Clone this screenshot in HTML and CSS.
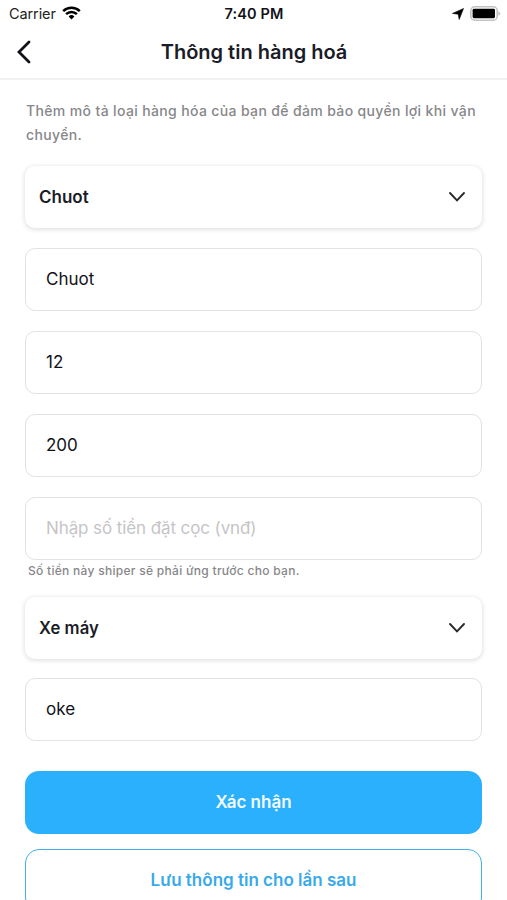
FILE: index.html
```html
<!DOCTYPE html>
<html lang="vi">
<head>
<meta charset="utf-8">
<title>Thông tin hàng hoá</title>
<link rel="stylesheet" href="styles.css">
</head>
<body>
<header class="top">
  <div class="status">
    <div class="carrier"><span>Carrier</span>
      <svg class="wifi" width="19" height="14" viewBox="0 0 19 14"><path d="M9.5 13.5 6.6 10.5a4.2 4.2 0 0 1 5.8 0z"/><path class="arc" d="M4.1 8.2a7.8 7.8 0 0 1 10.8 0M1.2 5.2a12 12 0 0 1 16.6 0"/></svg>
    </div>
    <div class="time">7:40 PM</div>
    <div class="power">
      <svg width="12" height="12" viewBox="0 0 12 12"><path d="M11.5.5 7.2 11.5 6.2 6.2.5 5.4z" stroke="#000" stroke-width=".6" stroke-linejoin="round"/></svg>
      <svg width="31" height="15" viewBox="0 0 31 15"><rect class="shell" x=".8" y=".8" width="26.4" height="13.4" rx="4"/><rect x="2.6" y="2.8" width="22.4" height="9.4" rx="1.4"/><path class="cap" d="M28.3 5.3q2 .7 2 2.2t-2 2.2z"/></svg>
    </div>
  </div>
  <div class="nav">
    <svg class="back" width="16" height="24" viewBox="0 0 16 24"><path d="M13 2 3 12l10 10"/></svg>
    <h1>Thông tin hàng hoá</h1>
  </div>
</header>
<main>
  <p class="intro">Thêm mô tả loại hàng hóa của bạn để đảm bảo quyền lợi khi vận<br>chuyển.</p>
  <div class="select"><span>Chuot</span><svg width="18" height="12" viewBox="0 0 18 12"><path d="m2 2 7 7.3L16 2"/></svg></div>
  <div class="field">Chuot</div>
  <div class="field">12</div>
  <div class="field">200</div>
  <div class="field deposit">Nhập số tiền đặt cọc (vnđ)</div>
  <p class="hint">Số tiền này shiper sẽ phải ứng trước cho bạn.</p>
  <div class="select vehicle"><span>Xe máy</span><svg width="18" height="12" viewBox="0 0 18 12"><path d="m2 2 7 7.3L16 2"/></svg></div>
  <div class="field">oke</div>
  <button class="primary">Xác nhận</button>
  <button class="secondary">Lưu thông tin cho lần sau</button>
</main>
</body>
</html>
```
FILE: styles.css
```css
* { box-sizing: border-box; }
body { margin: 0; height: 900px; overflow: hidden; background: #fff; color: #111217; font-family: Inter, sans-serif; }
.top { height: 80px; border-bottom: 2px solid #f1f1f1; }
.status { height: 27px; display: grid; grid-template-columns: 1fr 1fr 1fr; align-items: center; padding: 0 6px 0 9px; font-size: 14.5px; }
.carrier { color: #222; letter-spacing: -.1px; }
.carrier, .power { display: flex; align-items: center; gap: 6px; }
.power { justify-content: flex-end; }
.time { padding-right: 2px; text-align: center; font-weight: 600; letter-spacing: .1px; }
.wifi { margin-top: -2px; }
.arc { fill: none; stroke: #000; stroke-width: 2.5; }
.shell { fill: none; stroke: #c2c2c2; stroke-width: 1.6; }
.cap { fill: #c2c2c2; }
.nav { height: 51px; display: grid; grid-template-columns: 40px 1fr 40px; align-items: center; }
.back { margin: -1px 0 0 16px; fill: none; stroke: #111217; stroke-width: 2.8; stroke-linecap: round; }
h1 { margin: -1px 0 0 1px; text-align: center; font-size: 20px; font-weight: 600; line-height: 28px; color: #1a1c28; }
main { padding: 19px 25px 0; }
.intro { margin: 0 0 19px; padding-left: 1px; font-size: 14px; letter-spacing: .36px; line-height: 24px; font-weight: 500; color: #87878a; white-space: nowrap; }
.select, .field { height: 63px; display: flex; align-items: center; border-radius: 10px; margin-bottom: 20px; font-size: 17px; }
.field { border: 1px solid #e2e2e2; padding-left: 20px; padding-bottom: 1px; }
.select { height: 62px; justify-content: space-between; padding: 0 16px 0 14px; font-weight: 600; color: #1a1c26; box-shadow: 0 1px 4px 1px #0000001c; }
.select svg { fill: none; stroke: #292929; stroke-width: 1.9; stroke-linecap: round; }
.deposit { color: #c5c5c7; margin-bottom: 0; letter-spacing: -.1px; }
.hint { margin: 1px 0 16px; padding-left: 3px; font-size: 12px; letter-spacing: .29px; line-height: 20px; font-weight: 500; color: #87878a; }
.vehicle { margin-bottom: 19px; font-size: 16.7px; }
button { display: block; width: 100%; height: 63px; padding: 0 0 1px; border-radius: 14px; font: 600 17px Inter, sans-serif; }
.primary { margin: 30px 0 15px; border: 0; color: #f4fbff; background: #2ab0fc; }
.secondary { background: #fff; border: 1px solid #42afe9; color: #38a9ea; }
```
